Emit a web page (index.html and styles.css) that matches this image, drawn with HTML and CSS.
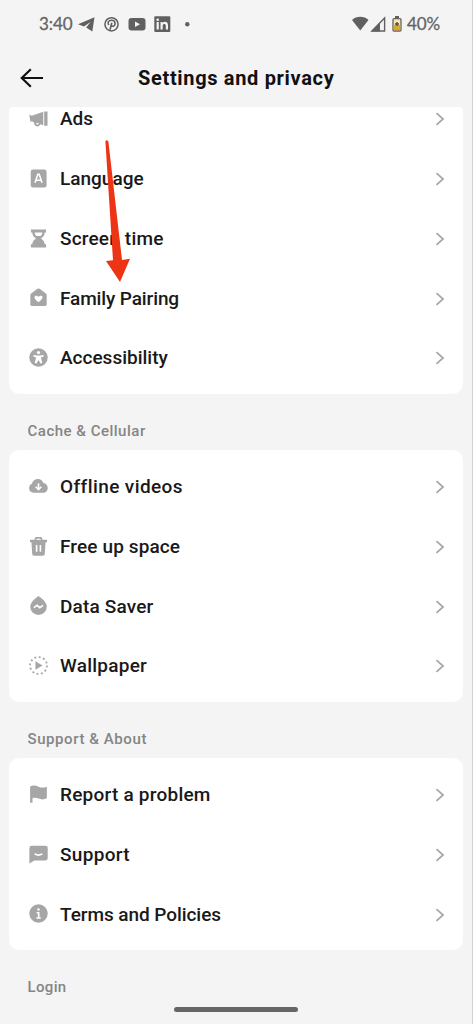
FILE: index.html
```html
<!DOCTYPE html>
<html lang="en">
<head>
<meta charset="utf-8">
<title>Settings and privacy</title>
<link rel="stylesheet" href="styles.css">
</head>
<body>
<svg class="defs" width="0" height="0"><defs>
<symbol id="chev" viewBox="0 0 10 14"><path d="M1.500 1.200 8 7l-6.500 5.800" fill="none" stroke="#a8a8a8" stroke-width="1.800"/></symbol>
</defs></svg>
<main class="phone">
<header class="status">
<span class="clock">3:40</span>
<svg class="apps" width="114" height="18" viewBox="0 0 114 18">
<path d="M0 9.300 16.500 2.300 14.300 16.500 8.200 12.500 12.500 7 6 11.500z" fill="#606060"/>
<circle cx="33.500" cy="9.300" r="6.600" fill="none" stroke="#606060" stroke-width="1.500"/>
<path d="M30.700 10.200c-1.600-3 0-5 2.900-5 4.700 0 4.100 6.100 1.200 6.100-1.200 0-1.700-.9-1.700-.9M33.800 7.800l-1.800 7" fill="none" stroke="#606060" stroke-width="1.600"/>
<rect x="50.500" y="3" width="17" height="12.600" rx="3" fill="#606060"/><path d="m57 6.500 5 2.800-5 2.800z" fill="#f4f4f4"/>
<rect x="76.300" y="1.300" width="16" height="15.700" rx="1" fill="#606060"/>
<g fill="#f4f4f4"><rect x="78.600" y="7" width="2.200" height="7.500"/><circle cx="79.700" cy="4.800" r="1.300"/><path d="M82.500 7h2.100v1c1.500-2 5.400-1.500 5.400 2v4.500h-2.200v-4c0-2.200-3.100-2.100-3.100 0v4h-2.200z"/></g>
<circle cx="109.300" cy="9.300" r="2.200" fill="#606060"/>
</svg>
<svg class="signals" width="52" height="18" viewBox="0 0 52 18">
<path d="M0 5C4.500.8 12 .8 16.500 5L8.250 15.500z" fill="#606060"/>
<path d="M20 16 32.600 3v13z" fill="none" stroke="#606060" stroke-width="1.400"/><path d="m19 16.500 9-9v9z" fill="#606060"/>
<path d="M43 2h4" stroke="#606060" stroke-width="2"/><rect x="41" y="3.700" width="8" height="12.300" rx="1" fill="#f3e4bf" stroke="#66645f" stroke-width="1.300"/><path d="M41.700 10h6.600v5.300h-6.600z" fill="#dda62c"/><path d="M45 7v4M43 9h4" stroke="#554a35" stroke-width="1.300"/>
</svg>
<span class="percent">40%</span>
</header>
<nav class="nav">
<svg class="back" width="24" height="20" viewBox="0 0 24 20"><path d="M23 10H1.800M10.800 1.200 1.800 10l9 8.800" fill="none" stroke="#111" stroke-width="2.200"/></svg>
<h1 class="title">Settings and privacy</h1>
</nav>
<section class="card first">
<div class="row"><svg class="icon" viewBox="0 0 20 20"><path d="M.3 6 3 7l12-4.200V17.200L11.800 16c-1.200 3.600-6.800 3-6.500-1.700L3 13l-1.500.8zM16 2.500h3.500v15H16z"/><path d="M7.500 14.500c0 2.300 2.600 2.500 3 .8z" fill="#fff"/></svg><span class="label ads">Ads</span><svg class="chev"><use href="#chev"/></svg></div>
<div class="row"><svg class="icon" viewBox="0 0 20 20"><rect x="1.800" y=".5" width="16.700" height="19" rx="2.500"/><path d="m6.300 14.500 3-9h1.400l3 9M7.500 11.800h5" class="cut"/></svg><span class="label language">Language</span><svg class="chev"><use href="#chev"/></svg></div>
<div class="row"><svg class="icon" viewBox="0 0 20 20"><path d="M2 .5h16v3.300h-1.500c0 3-1.500 4.700-3.900 6.200 2.400 1.500 3.900 3.500 3.900 6H18v3.500H2V16h1.500c0-2.500 1.500-4.500 3.900-6C5 8.500 3.500 6.800 3.500 3.800H2z"/><path d="M6 3.800h8c0 1.500-.8 2.700-1.600 3.500H7.600C6.800 6.500 6 5.300 6 3.800z" fill="#fff"/></svg><span class="label screen">Screen time</span><svg class="chev"><use href="#chev"/></svg></div>
<div class="row"><svg class="icon" viewBox="0 0 20 20"><path d="M8.800.8Q10 0 11.200.8l6.500 5Q18.600 6.500 18.600 8v9q0 2-2 2H3.400q-2 0-2-2V8q0-1.500.9-2.200z"/><path d="M10 15c-6-4-4.300-6.800-2.600-6.800 1.300 0 2 .5 2.600 1.400.6-.9 1.300-1.400 2.600-1.400 1.700 0 3.400 2.800-2.600 6.800z" fill="#fff"/></svg><span class="label family">Family Pairing</span><svg class="chev"><use href="#chev"/></svg></div>
<div class="row"><svg class="icon" viewBox="0 0 20 20"><circle cx="10" cy="10" r="9.700"/><circle cx="10" cy="4.800" r="1.700" fill="#fff"/><path d="M4.800 7.300 8.500 8h3l3.700-.7.300 1.700-3 1 1.500 5.800-1.800.5L10 12.500l-2.200 3.800-1.800-.5L7.500 10l-3-1z" fill="#fff"/></svg><span class="label access">Accessibility</span><svg class="chev"><use href="#chev"/></svg></div>
</section>
<h2 class="heading cache">Cache &amp; Cellular</h2>
<section class="card">
<div class="row"><svg class="icon" viewBox="0 0 20 20"><path d="M5 16.500C-1 16.500-1.200 9 3 7.200 4.500.8 13.500.5 15 6.200c6.500.8 6 10.300 0 10.300z"/><path d="M10 6.500v6.500M7 10.300l3 3 3-3" class="cut"/></svg><span class="label offline">Offline videos</span><svg class="chev"><use href="#chev"/></svg></div>
<div class="row"><svg class="icon" viewBox="0 0 20 20"><path d="M6 3V1.700Q6 .1 7.500.1h5q1.500 0 1.500 1.600V3h5v2.400h-1.600L16.600 18q-.1 1.800-1.800 1.800H5.200Q3.500 19.800 3.400 18L2.600 5.400H1V3z"/><path d="M7.800 1.800h4.400V3H7.800z" fill="#fff"/><path d="M8 8.500v7M12 8.500v7" class="cut"/></svg><span class="label free">Free up space</span><svg class="chev"><use href="#chev"/></svg></div>
<div class="row"><svg class="icon" viewBox="0 0 20 20"><path d="M10 .1c3.500 2.300 8.700 6.900 8.700 11.100a8.700 8.700 0 0 1-17.400 0C1.300 7 6.500 2.400 10 .1z"/><path d="m5.200 12.300 3.300-2.500 2.800 2.500 3.500-2.500" class="cut"/></svg><span class="label data">Data Saver</span><svg class="chev"><use href="#chev"/></svg></div>
<div class="row"><svg class="icon" viewBox="0 0 20 20"><circle cx="10" cy="10" r="8.900" fill="none" stroke="#a6a6a6" stroke-width="1.900" stroke-dasharray="2 2.660"/><path d="m6.800 5.500 7.400 4.500-7.400 4.500z"/></svg><span class="label wallpaper">Wallpaper</span><svg class="chev"><use href="#chev"/></svg></div>
</section>
<h2 class="heading about">Support &amp; About</h2>
<section class="card">
<div class="row"><svg class="icon" viewBox="0 0 20 20"><path d="M1.200 1.700C5 0 7 .6 10 1.800c3 1.200 5.500 1.200 8.800 0V14c-3.300 1.500-5.800 1.500-8.800.3-2.500-1-4.500-1-6.300-.3v4.800H1.200z"/></svg><span class="label report">Report a problem</span><svg class="chev"><use href="#chev"/></svg></div>
<div class="row"><svg class="icon" viewBox="0 0 20 20"><path d="M3 .8h14q2.700 0 2.700 2.500v10.500q0 2.500-2.700 2.500H5.500L.4 19.500V3.300Q.4.800 3 .8z"/><path d="M6 9.200q4 2.800 8 0" class="cut"/></svg><span class="label support">Support</span><svg class="chev"><use href="#chev"/></svg></div>
<div class="row"><svg class="icon" viewBox="0 0 20 20"><circle cx="10" cy="10" r="9.700"/><circle cx="10" cy="5.800" r="1.300" fill="#fff"/><path d="M8 9.200h2.200v5.500M7.800 14.700h4.600" class="cut"/></svg><span class="label terms">Terms and Policies</span><svg class="chev"><use href="#chev"/></svg></div>
</section>
<h2 class="heading login">Login</h2>
<svg class="arrow" width="26" height="144" viewBox="0 0 26 144"><path d="M.4 2.500Q1.800 0 3.400 2.500L17 121l8-1.300L15 143 1 122l7-.7z" fill="#ed3414"/></svg>
<div class="home"></div>
</main>
</body>
</html>
```
FILE: styles.css
```css
* { box-sizing: border-box; }
body { margin: 0; background: #f4f4f4; font-family: Roboto, "Liberation Sans", sans-serif; }
.defs { display: block; position: absolute; }
.phone { position: relative; width: 473px; height: 1024px; overflow: hidden; border-right: 1px solid #d2d2d2; background: #f4f4f4; }
.status { display: flex; align-items: center; height: 48px; padding: 0 32px 0 39px; color: #646464; font-family: Lato, Roboto, sans-serif; -webkit-text-stroke: .3px #646464; }
.clock { width: 39px; padding-bottom: 1px; font-size: 17px; letter-spacing: -.1px; }
.apps { flex: none; }
.signals { flex: none; margin-left: auto; margin-right: 3px; }
.percent { width: 33px; padding-bottom: 1px; font-size: 17px; letter-spacing: -.1px; white-space: nowrap; }
.nav { display: flex; align-items: center; height: 59px; padding-left: 20px; }
.back { flex: none; }
.title { margin: 0 0 0 94px; font-size: 20px; font-weight: 700; line-height: 24px; letter-spacing: .67px; color: #111; white-space: nowrap; }
.card { margin: 0 9px; padding: 6.500px 0; border-radius: 10px; background: #fff; }
.first { display: flex; flex-direction: column; justify-content: flex-end; height: 287px; overflow: hidden; border-radius: 4px 4px 10px 10px; }
.row { display: flex; flex: none; align-items: center; height: 59.750px; padding: 0 18px 0 20px; }
.icon { flex: none; width: 19px; height: 19px; margin-right: 12px; fill: #a6a6a6; }
.cut { fill: none; stroke: #fff; stroke-width: 1.700; }
.label { flex: 1; padding-top: 1.500px; font-size: 19px; font-weight: 500; line-height: 24px; color: #191919; white-space: nowrap; }
.screen { letter-spacing: .18px; }
.family { letter-spacing: -.12px; }
.offline { letter-spacing: .4px; }
.free { letter-spacing: .12px; }
.data { letter-spacing: .17px; }
.wallpaper { letter-spacing: .25px; }
.report { letter-spacing: .23px; }
.support { letter-spacing: .3px; }
.terms { letter-spacing: -.06px; }
.chev { flex: none; width: 10px; height: 14px; margin-top: 1.500px; }
.heading { height: 56px; margin: 0; padding: 27px 0 0 27.500px; font-size: 15px; font-weight: 500; line-height: 20px; letter-spacing: .5px; color: #858585; white-space: nowrap; }
.about { letter-spacing: .58px; }
.login { letter-spacing: .35px; }
.arrow { position: absolute; left: 105px; top: 139px; }
.home { position: absolute; left: 174px; top: 1007px; width: 124px; height: 5px; border-radius: 3px; background: #666; }
```
